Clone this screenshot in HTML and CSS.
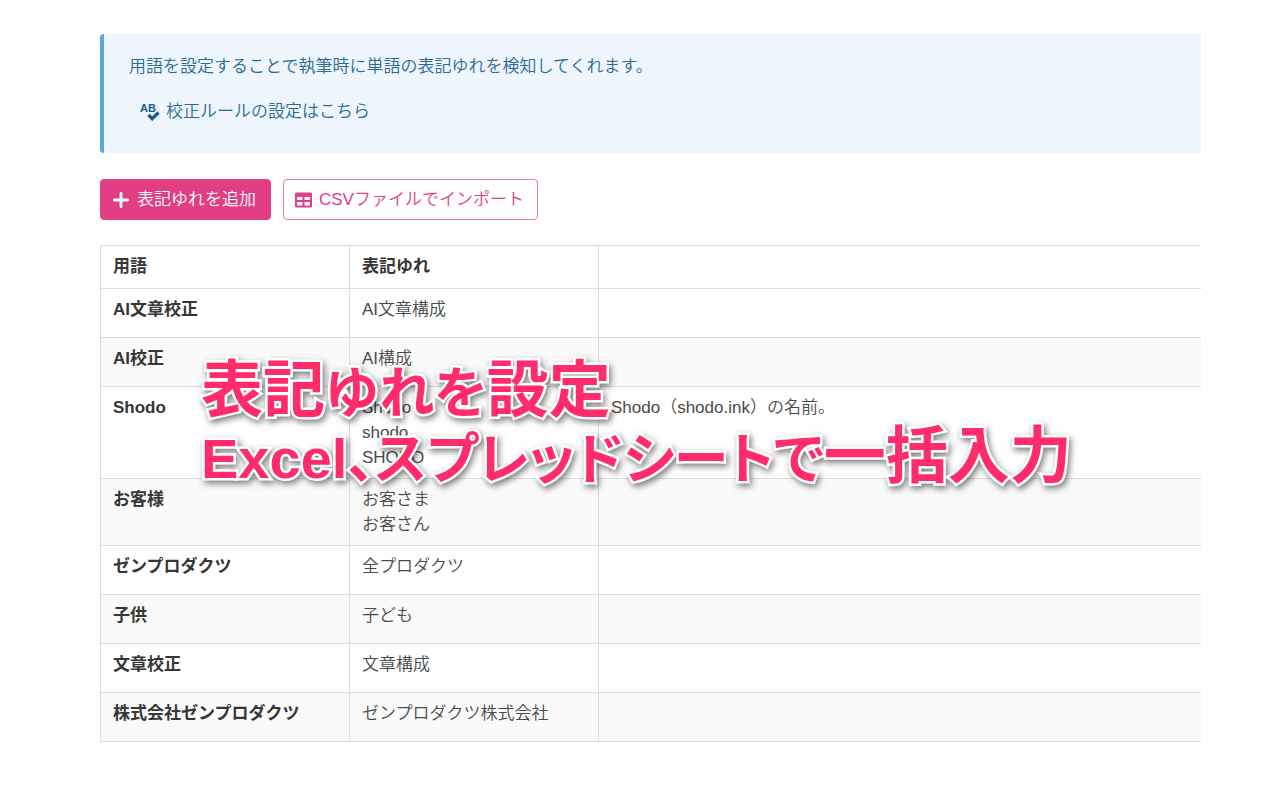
FILE: index.html
```html
<!DOCTYPE html>
<html lang="ja">
<head>
<meta charset="utf-8">
<meta name="viewport" content="width=device-width, initial-scale=1">
<title>表記ゆれを設定</title>
<link rel="stylesheet" href="styles.css">
</head>
<body>
<main class="page">
  <section class="notice">
    <p class="notice-text">用語を設定することで執筆時に単語の表記ゆれを検知してくれます。</p>
    <a class="notice-link" href="#rules">
      <svg class="icon-spell" viewBox="0 0 20 18" aria-hidden="true">
        <text class="icon-letters" x="0" y="9">AB</text>
        <path d="M8.5 12l3.7 3.7 6.3-6.2" fill="none" stroke="currentColor" stroke-width="3.2"/>
      </svg>
      <span>校正ルールの設定はこちら</span>
    </a>
  </section>

  <div class="actions">
    <button class="button button-primary" type="button">
      <svg class="icon-plus" viewBox="0 0 16 16" aria-hidden="true"><path d="M8 1.5v13M1.5 8h13" fill="none" stroke="currentColor" stroke-width="2.8" stroke-linecap="round"/></svg>
      <span>表記ゆれを追加</span>
    </button>
    <button class="button button-outline" type="button">
      <svg class="icon-table" viewBox="0 0 17 16" aria-hidden="true"><path fill="currentColor" fill-rule="evenodd" d="M1.5 .5h14a1.5 1.5 0 0 1 1.5 1.5v12a1.5 1.5 0 0 1-1.5 1.5h-14A1.5 1.5 0 0 1 0 14V2A1.5 1.5 0 0 1 1.500 .5zM2 5v3h5.500V5zM9.500 5v3H15V5zM2 10v3.500h5.500V10zM9.500 10v3.500H15V10z"/></svg>
      <span>CSVファイルでインポート</span>
    </button>
  </div>

  <table class="terms">
    <colgroup><col class="col-term"><col class="col-variant"><col></colgroup>
    <thead>
      <tr><th scope="col">用語</th><th scope="col">表記ゆれ</th><td></td></tr>
    </thead>
    <tbody>
      <tr><th scope="row">AI文章校正</th><td>AI文章構成</td><td></td></tr>
      <tr><th scope="row">AI校正</th><td>AI構成</td><td></td></tr>
      <tr><th scope="row">Shodo</th><td>Shodo<br>shodo<br>SHODO</td><td>Shodo（shodo.ink）の名前。</td></tr>
      <tr><th scope="row">お客様</th><td>お客さま<br>お客さん</td><td></td></tr>
      <tr><th scope="row">ゼンプロダクツ</th><td>全プロダクツ</td><td></td></tr>
      <tr><th scope="row">子供</th><td>子ども</td><td></td></tr>
      <tr><th scope="row">文章校正</th><td>文章構成</td><td></td></tr>
      <tr><th scope="row">株式会社ゼンプロダクツ</th><td>ゼンプロダクツ株式会社</td><td></td></tr>
    </tbody>
  </table>

  <h1 class="caption">
    <span class="caption-line">表記<span class="kana">ゆれを</span>設定</span>
    <span class="caption-line"><span class="latin">Excel</span><span class="kana">、スプレッドシートで</span>一括入力</span>
  </h1>
</main>
</body>
</html>
```
FILE: styles.css
```css
* { box-sizing: border-box; }

body {
  margin: 0;
  background: #fff;
  color: #4a4a4a;
  font: 350 17px/25px "Liberation Sans", "Noto Sans CJK JP", sans-serif;
}

.page {
  position: relative;
  padding: 34px 79px 40px 100px;
}

.notice {
  display: flex;
  flex-direction: column;
  align-items: flex-start;
  gap: 20px;
  padding: 20px 25px 29px;
  border-left: 4px solid #5ba8d6;
  border-radius: 4px 0 0 4px;
  background: #eef5fc;
  color: #296b96;
}

.notice-text { margin: 0; }

.notice-link {
  display: flex;
  align-items: center;
  gap: 6px;
  margin-left: 11px;
  color: inherit;
  text-decoration: none;
}

.icon-spell { width: 20px; height: 18px; color: #17608a; }
.icon-letters { font: bold 11px "Liberation Sans", sans-serif; fill: currentColor; }

.actions {
  display: flex;
  gap: 12px;
  margin: 26px 0 25px;
}

.button {
  display: flex;
  align-items: center;
  height: 41px;
  border: 1px solid #e23e83;
  border-radius: 4px;
  font: inherit;
  white-space: nowrap;
}

.button-primary {
  gap: 8px;
  padding: 0 14px 0 12px;
  background: #e23e83;
  color: #fff;
}

.button-outline {
  gap: 7px;
  padding: 0 13px 0 11px;
  border-color: #ec78a8;
  background: #fff;
  color: #e23e83;
}

.icon-plus { width: 16px; height: 16px; }
.icon-table { width: 17px; height: 16px; }

.terms {
  width: 100%;
  table-layout: fixed;
  border-collapse: collapse;
}

.col-term, .col-variant { width: 249px; }

.terms th, .terms td {
  height: 49px;
  padding: 8px 12px;
  border: 1px solid #dbdbdb;
  text-align: left;
  vertical-align: top;
}

.terms thead th, .terms thead td { height: 43px; }
.terms th { color: #363636; font-weight: 700; }
.terms td:last-child { border-right: 0; }
.terms tbody tr:nth-child(even) { background: #fafafa; }

.caption {
  position: absolute;
  top: 359px;
  left: 201px;
  margin: 0;
  color: #ff2b6a;
  font-size: 62px;
  font-weight: 700;
  line-height: 64px;
  white-space: nowrap;
  -webkit-text-stroke: 5px #fff;
  paint-order: stroke fill;
  filter: drop-shadow(2px 3px 3px rgba(0, 0, 0, 0.5));
}

.caption-line { display: block; }
.kana { font-size: 55px; font-feature-settings: "palt"; }
.latin { font-size: 56px; }
```
